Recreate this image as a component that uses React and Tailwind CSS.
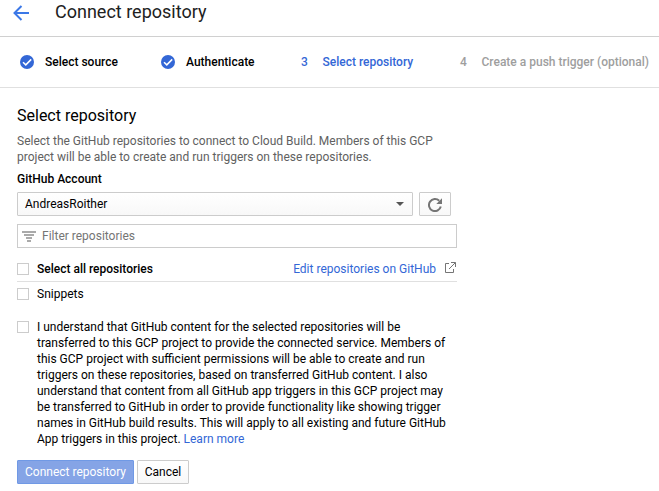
const CheckCircle = () => (
  <svg className="h-[14px] w-[14px] shrink-0" viewBox="0 0 14 14">
    <circle cx="7" cy="7" r="7" fill="#3367d6" />
    <path d="M3 7.2 5.8 9.9 11.2 4.4" fill="none" stroke="#fff" strokeWidth="1.5" />
  </svg>
);

const Checkbox = () => (
  <span role="checkbox" aria-checked="false" className="h-3 w-3 shrink-0 border border-[#cccccc] bg-white" />
);

const consent = [
  "I understand that GitHub content for the selected repositories will be",
  "transferred to this GCP project to provide the connected service. Members of",
  "this GCP project with sufficient permissions will be able to create and run",
  "triggers on these repositories, based on transferred GitHub content. I also",
  "understand that content from all GitHub app triggers in this GCP project may",
  "be transferred to GitHub in order to provide functionality like showing trigger",
  "names in GitHub build results. This will apply to all existing and future GitHub",
];

export default function App() {
  return (
    <div className="h-[491px] w-[659px] overflow-hidden bg-white font-[Roboto,sans-serif] text-[12px] leading-4 whitespace-nowrap text-black">
      <header className="flex h-[37px] items-start border-b border-[#d0d0d0]">
        <svg className="mt-[5px] ml-[13px] h-4 w-4" viewBox="0 0 16 16" fill="none" stroke="#3b78e7" strokeWidth="2">
          <path d="M16 8H1.5M8.5 1 1.5 8l7 7" />
        </svg>
        <h1 className="ml-[26px] text-[18px] leading-6 text-[#212121]">Connect repository</h1>
      </header>

      <nav className="flex h-[51px] items-center border-b border-[#e0e0e0] pl-5 font-medium">
        <div className="flex w-[141px] items-center gap-[11px]">
          <CheckCircle />
          <span>Select source</span>
        </div>
        <div className="flex w-[140px] items-center gap-[11px]">
          <CheckCircle />
          <span>Authenticate</span>
        </div>
        <div className="flex w-[159px] items-center text-[#3367d6]">
          <span className="w-[21.5px]">3</span>
          <span>Select repository</span>
        </div>
        <div className="flex items-center text-[#9e9e9e]">
          <span className="w-[21.5px]">4</span>
          <span>Create a push trigger (optional)</span>
        </div>
      </nav>

      <main className="w-[457px] pt-[18px] pl-[17px]">
        <h2 className="text-[16px] leading-5">Select repository</h2>
        <p className="mt-[7px] text-[#616161]">
          Select the GitHub repositories to connect to Cloud Build. Members of this GCP
          <br />
          project will be able to create and run triggers on these repositories.
        </p>
        <div className="mt-[6px] font-medium">GitHub Account</div>

        <div className="mt-[5px] flex gap-[6px]">
          <div className="flex h-6 w-[396px] items-center justify-between rounded-[1px] border border-[#cccccc] bg-linear-to-b from-white to-[#f8f8f8] pr-2 pl-[7px]">
            <span>AndreasRoither</span>
            <svg className="h-1 w-2" viewBox="0 0 8 4">
              <path d="M0 0h8L4 4z" fill="#555" />
            </svg>
          </div>
          <button className="flex h-6 w-8 items-center justify-center rounded-[1px] border border-[#cccccc] bg-linear-to-b from-white to-[#f8f8f8]">
            <svg className="mt-[2px] h-[14px] w-[14px]" viewBox="0 0 14 14">
              <path d="M11.2 2.8A6 6 0 1 0 12.8 8.6" fill="none" stroke="#757575" strokeWidth="2" />
              <path d="M14 .3V6H8.3z" fill="#757575" />
            </svg>
          </button>
        </div>

        <div className="mt-2 flex h-6 items-center border border-[#cccccc] pl-1 text-[#757575]">
          <svg className="mt-px h-[11px] w-[14px]" viewBox="0 0 14 11" fill="#aaaaaa">
            <path d="M0 0h14v2H0zM2 3h10v2H2zM4 6h6v2H4zM5 9h4v2H5z" />
          </svg>
          <span className="ml-[6px]">Filter repositories</span>
        </div>

        <div className="mt-3 flex h-[22px] items-start border-b border-[#e0e0e0]">
          <div className="flex h-[18px] items-center gap-2">
            <Checkbox />
            <span className="font-medium">Select all repositories</span>
          </div>
          <div className="mr-px ml-auto flex items-start">
            <a className="mt-px text-[#3367d6]">Edit repositories on GitHub</a>
            <svg className="mt-[2px] ml-[9px] h-[11px] w-[11px]" viewBox="0 0 11 11" fill="none" stroke="#757575">
              <path d="M4 1.5H.5v9h8V7M6 .5h4.5V5M4 7 10.3.7" />
            </svg>
          </div>
        </div>
        <div className="mt-1 flex h-4 items-center gap-2">
          <Checkbox />
          <span>Snippets</span>
        </div>

        <div className="mt-[17px] flex items-start gap-2">
          <span className="flex pt-[2px]">
            <Checkbox />
          </span>
          <p>
            {consent.map((line) => (
              <span key={line} className="block">
                {line}
              </span>
            ))}
            App triggers in this project. <a className="text-[#3367d6]">Learn more</a>
          </p>
        </div>

        <div className="mt-[13px] flex gap-[3px]">
          <button className="flex h-6 w-[117px] items-center justify-center rounded-[1px] border border-[#7099e5] bg-[#85a4e6] text-white">
            Connect repository
          </button>
          <button className="flex h-6 w-[52px] items-center justify-center rounded-[1px] border border-[#cccccc] bg-linear-to-b from-white to-[#f8f8f8]">
            Cancel
          </button>
        </div>
      </main>
    </div>
  );
}
